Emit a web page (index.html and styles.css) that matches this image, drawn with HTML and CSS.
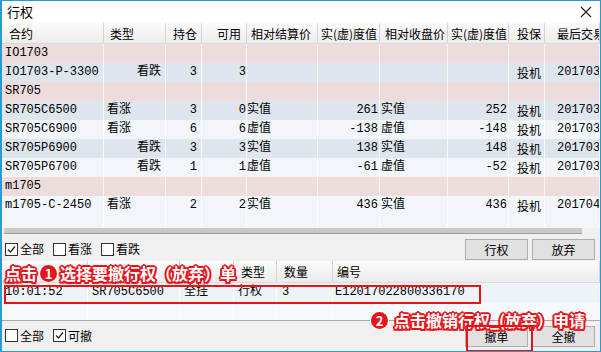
FILE: index.html
```html
<!DOCTYPE html>
<html lang="zh-CN">
<head>
  <meta charset="UTF-8" />
  <title>行权</title>
  <link rel="stylesheet" href="styles.css">
</head>
<body>
  <div class="window">
    <div class="titlebar">
      <span class="title">行权</span>
      <svg class="close" width="12" height="12" viewBox="0 0 12 12">
        <path d="M1 1 L11 11 M11 1 L1 11" stroke="#222" stroke-width="1.2" />
      </svg>
    </div>

    <div class="grid main-grid">
      <div class="row head">
        <div class="c">合约</div><div class="c">类型</div><div class="c r">持仓</div><div class="c r">可用</div>
        <div class="c">相对结算价</div><div class="c">实(虚)度值</div><div class="c">相对收盘价</div><div class="c">实(虚)度值</div>
        <div class="c">投保</div><div class="c">最后交易</div>
      </div>
      <div class="row group">
        <div class="c">IO1703</div><div class="c"></div><div class="c"></div><div class="c"></div><div class="c"></div>
        <div class="c"></div><div class="c"></div><div class="c"></div><div class="c"></div><div class="c"></div>
      </div>
      <div class="row dark">
        <div class="c">IO1703-P-3300</div><div class="c r">看跌</div><div class="c r">3</div><div class="c r">3</div><div class="c"></div>
        <div class="c"></div><div class="c"></div><div class="c"></div><div class="c">投机</div><div class="c">20170317</div>
      </div>
      <div class="row group">
        <div class="c">SR705</div><div class="c"></div><div class="c"></div><div class="c"></div><div class="c"></div>
        <div class="c"></div><div class="c"></div><div class="c"></div><div class="c"></div><div class="c"></div>
      </div>
      <div class="row dark">
        <div class="c">SR705C6500</div><div class="c">看涨</div><div class="c r">3</div><div class="c r">0</div><div class="c">实值</div>
        <div class="c r">261</div><div class="c">实值</div><div class="c r">252</div><div class="c">投机</div><div class="c">20170308</div>
      </div>
      <div class="row light">
        <div class="c">SR705C6900</div><div class="c">看涨</div><div class="c r">6</div><div class="c r">6</div><div class="c">虚值</div>
        <div class="c r">-138</div><div class="c">虚值</div><div class="c r">-148</div><div class="c">投机</div><div class="c">20170308</div>
      </div>
      <div class="row dark">
        <div class="c">SR705P6900</div><div class="c r">看跌</div><div class="c r">3</div><div class="c r">3</div><div class="c">实值</div>
        <div class="c r">138</div><div class="c">实值</div><div class="c r">148</div><div class="c">投机</div><div class="c">20170308</div>
      </div>
      <div class="row light">
        <div class="c">SR705P6700</div><div class="c r">看跌</div><div class="c r">1</div><div class="c r">1</div><div class="c">虚值</div>
        <div class="c r">-61</div><div class="c">虚值</div><div class="c r">-52</div><div class="c">投机</div><div class="c">20170308</div>
      </div>
      <div class="row group">
        <div class="c">m1705</div><div class="c"></div><div class="c"></div><div class="c"></div><div class="c"></div>
        <div class="c"></div><div class="c"></div><div class="c"></div><div class="c"></div><div class="c"></div>
      </div>
      <div class="row light">
        <div class="c">m1705-C-2450</div><div class="c">看涨</div><div class="c r">2</div><div class="c r">2</div><div class="c">实值</div>
        <div class="c r">436</div><div class="c">实值</div><div class="c r">436</div><div class="c">投机</div><div class="c">20170407</div>
      </div>
      <div class="row light partial">
        <div class="c"></div><div class="c"></div><div class="c"></div><div class="c"></div><div class="c"></div>
        <div class="c"></div><div class="c"></div><div class="c"></div><div class="c"></div><div class="c"></div>
      </div>
    </div>
    <div class="hscroll"><div class="thumb"></div></div>

    <div class="toolbar">
      <label class="check"><span class="box on"><svg width="9" height="9" viewBox="0 0 9 9"><path d="M1 4.5 L3.5 7 L8 1.5" fill="none" stroke="#222" stroke-width="1.2"/></svg></span>全部</label>
      <label class="check"><span class="box"></span>看涨</label>
      <label class="check"><span class="box"></span>看跌</label>
      <div class="buttons">
        <button>行权</button>
        <button>放弃</button>
      </div>
    </div>

    <div class="grid order-grid">
      <div class="row head">
        <div class="c"></div><div class="c"></div><div class="c"></div><div class="c">类型</div><div class="c">数量</div><div class="c">编号</div>
      </div>
      <div class="row order">
        <div class="c">10:01:52</div><div class="c">SR705C6500</div><div class="c">全挂</div><div class="c">行权</div><div class="c">3</div><div class="c">E12017022800336170</div>
      </div>
      <div class="row order empty">
        <div class="c"></div><div class="c"></div><div class="c"></div><div class="c"></div><div class="c"></div><div class="c"></div>
      </div>
    </div>

    <div class="toolbar bottom">
      <label class="check"><span class="box"></span>全部</label>
      <label class="check"><span class="box on"><svg width="9" height="9" viewBox="0 0 9 9"><path d="M1 4.5 L3.5 7 L8 1.5" fill="none" stroke="#222" stroke-width="1.2"/></svg></span>可撤</label>
      <div class="buttons">
        <button>撤单</button>
        <button>全撤</button>
      </div>
    </div>

    <!-- annotations -->
    <div class="note note-1">
      <span class="note-text">点击</span>
      <span class="num">1</span>
      <span class="note-text">选择要撤行权（放弃）单</span>
    </div>
    <div class="mark mark-row"></div>
    <div class="note note-2">
      <span class="num">2</span>
      <span class="note-text">点击撤销行权_(放弃）申请</span>
    </div>
    <div class="mark mark-btn"></div>
  </div>
</body>
</html>
```

FILE: styles.css
```css
body {
  margin: 0;
  background: #ffffff;
  font-family: "Noto Sans CJK SC", sans-serif;
  font-size: 12px;
  color: #000;
}

.window {
  position: relative;
  width: 601px;
  height: 352px;
  box-sizing: border-box;
  border: 1px solid #2b9ad3;
  border-left-width: 2px;
  background: #f0f0f0;
  display: flex;
  flex-direction: column;
  overflow: hidden;
}

.titlebar {
  height: 22px;
  flex: none;
  background: #fff;
  display: flex;
  align-items: center;
  justify-content: space-between;
  padding: 0 8px 0 5px;
}

.title {
  font-size: 13px;
  line-height: 22px;
}

/* grids */
.grid {
  flex: none;
  background: #fff;
}

.row {
  display: grid;
  height: 19px;
  line-height: 19px;
}

.main-grid .row {
  grid-template-columns: 102px 62px 36px 45px 71px 62px 68px 61px 36px 1fr;
}

.order-grid .row {
  grid-template-columns: 86px 92px 54px 43px 56px 1fr;
}

.c {
  overflow: hidden;
  white-space: nowrap;
  padding: 0 2px 0 3px;
  border-right: 1px solid rgba(255, 255, 255, 0.75);
  font-family: "Liberation Mono", "Noto Sans CJK SC", monospace;
  font-size: 12px;
}

.c.r {
  text-align: right;
}

.row.head {
  height: 21px;
  line-height: 21px;
  background: linear-gradient(#fbfbfb, #ececec);
  border-bottom: 1px solid #dadada;
  box-sizing: border-box;
}

.row.head .c {
  font-family: "Noto Sans CJK SC", sans-serif;
  border-right: 1px solid #d3d3d3;
  padding: 0 5px 0 7px;
}

.main-grid .head .c:nth-child(2) { padding-left: 6px; }
.main-grid .head .c:nth-child(3) { padding-right: 6px; }
.main-grid .head .c:nth-child(4) { padding-right: 5px; }
.main-grid .head .c:nth-child(5) { padding-left: 4px; }
.main-grid .head .c:nth-child(6) { padding-left: 3px; }
.main-grid .head .c:nth-child(7) { padding-left: 5px; }
.main-grid .head .c:nth-child(8) { padding-left: 3px; }
.main-grid .head .c:nth-child(9) { padding-left: 8px; }
.main-grid .head .c:nth-child(10) { padding-left: 12px; }

.main-grid .row:not(.head) .c:nth-child(2) { padding-right: 4px; }
.main-grid .row:not(.head) .c:nth-child(3) { padding-right: 4px; }
.main-grid .row:not(.head) .c:nth-child(4) { padding-right: 0; }
.main-grid .row:not(.head) .c:nth-child(5) { padding-left: 0; }
.main-grid .row:not(.head) .c:nth-child(6) { padding-right: 1px; }
.main-grid .row:not(.head) .c:nth-child(7) { padding-left: 1px; }
.main-grid .row:not(.head) .c:nth-child(8) { padding-right: 1px; }
.main-grid .row:not(.head) .c:nth-child(9) { padding-left: 8px; font-family: "Noto Sans CJK SC", sans-serif; }
.main-grid .row:not(.head) .c:nth-child(10) { padding-left: 12px; }

.row.group { background: #ecdcdc; }
.row.dark { background: #dfe5ed; }
.row.light { background: #f2f6fb; }
.row.partial { height: 13px; }

.hscroll {
  flex: none;
  height: 6px;
  background: #f0f0f0;
  padding: 0 18px 0 2px;
}

.thumb {
  height: 5px;
  background: #c9c9c9;
  border-bottom: 1px solid #9d9d9d;
}

/* toolbars */
.toolbar {
  flex: none;
  height: 24px;
  margin-top: 3px;
  display: flex;
  align-items: center;
  padding: 0 5px 0 3px;
  background: #f0f0f0;
}

.toolbar.bottom {
  height: 30px;
  margin-top: 0;
  border-top: 1px solid #a9a9a9;
  box-sizing: border-box;
}

.check {
  display: flex;
  align-items: center;
  margin-right: 9px;
  line-height: 14px;
}

.box {
  width: 11px;
  height: 11px;
  border: 1px solid #333;
  background: #fff;
  margin-right: 2px;
  display: flex;
  align-items: center;
  justify-content: center;
}

.buttons {
  margin-left: auto;
  display: flex;
  gap: 4px;
}

button {
  width: 63px;
  height: 21px;
  padding: 0;
  background: #e1e1e1;
  border: 1px solid #adadad;
  font-family: "Noto Sans CJK SC", sans-serif;
  font-size: 12px;
  line-height: 19px;
  color: #000;
}

.toolbar.bottom .buttons {
  margin-top: 1px;
}

.order-grid .row.head {
  height: 22px;
  line-height: 22px;
}

.order-grid .head .c:nth-child(4) { padding-left: 7px; }
.order-grid .head .c:nth-child(5) { padding-left: 7px; }
.order-grid .head .c:nth-child(6) { padding-left: 4px; }

.row.order {
  background: #eef3f9;
}

.order-grid .order .c:nth-child(2),
.order-grid .order .c:nth-child(3),
.order-grid .order .c:nth-child(4) { padding-left: 4px; }
.order-grid .order .c:nth-child(5) { padding-left: 5px; }
.order-grid .order .c:nth-child(6) { padding-left: 2px; }

.row.order.empty {
  height: 18px;
  background: #f6f9fc;
}

/* annotations */
.note {
  position: absolute;
  display: flex;
  align-items: center;
  gap: 3px;
  font-family: "Noto Sans CJK SC", sans-serif;
  font-weight: 700;
  font-size: 16px;
  line-height: 18px;
}

.note-text {
  color: #fff;
  text-shadow:
    2px 0 #e8141c, -2px 0 #e8141c, 0 2px #e8141c, 0 -2px #e8141c,
    1.5px 1.5px #e8141c, -1.5px 1.5px #e8141c, 1.5px -1.5px #e8141c, -1.5px -1.5px #e8141c;
}

.num {
  width: 17px;
  height: 17px;
  border-radius: 50%;
  background: #e8141c;
  color: #fff;
  font-size: 13px;
  line-height: 17px;
  text-align: center;
  box-shadow: 0 0 0 1px #fff;
}

.note-1 {
  left: 3px;
  top: 263px;
}

.note-2 {
  left: 369px;
  top: 310px;
  gap: 6px;
}

.mark {
  position: absolute;
  border: 2px solid #ee1111;
  box-sizing: border-box;
}

.mark-row {
  left: 2px;
  top: 284px;
  width: 477px;
  height: 19px;
}

.mark-btn {
  left: 464px;
  top: 324px;
  width: 67px;
  height: 27px;
}
```
